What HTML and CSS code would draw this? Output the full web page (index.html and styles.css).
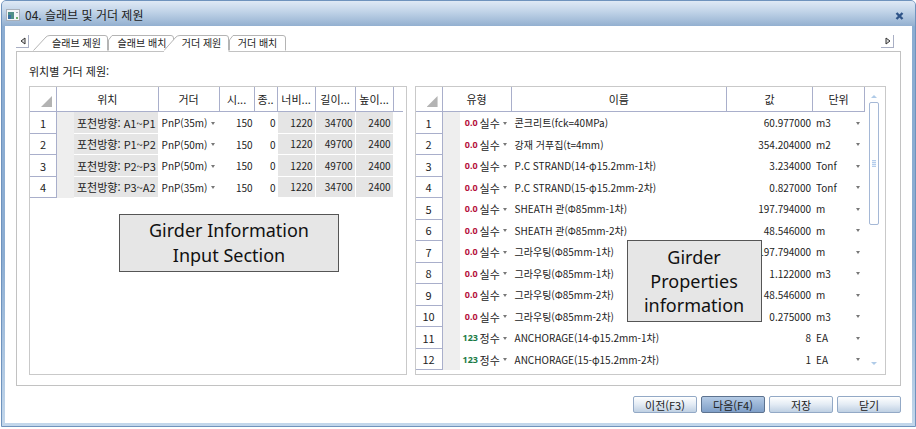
FILE: index.html
```html
<!DOCTYPE html>
<html lang="ko">
<head>
    <meta charset="UTF-8">
    <meta name="viewport" content="width=device-width, initial-scale=1.0">
    <title>04. 슬래브 및 거더 제원</title>
    <link rel="stylesheet" href="styles.css">
</head>
<body>
<div class="window">
    <header class="titlebar">
        <svg class="app-icon" width="14" height="12" viewBox="0 0 14 12">
            <rect x="0.5" y="0.5" width="13" height="11" fill="#f4f6f8" stroke="#a9b0ba"/>
            <rect x="2" y="3" width="6" height="7" fill="#4f8f88"/>
            <rect x="2" y="6" width="3" height="4" fill="#3a6fa0"/>
            <rect x="10" y="3" width="2" height="1" fill="#9aa3ae"/>
            <rect x="10" y="8" width="2" height="2" fill="#6fae6a"/>
        </svg>
        <h1>04. 슬래브 및 거더 제원</h1>
        <button type="button" class="close" aria-label="닫기">
            <svg width="9" height="8" viewBox="0 0 9 8"><path d="M1.500 1L7.500 7M7.500 1L1.500 7" stroke="#2f5488" stroke-width="2.400" fill="none"/></svg>
        </button>
    </header>

    <main class="content">
        <nav class="tabs">
            <button type="button" class="scroll-tab" aria-label="이전 탭">
                <svg width="6" height="8" viewBox="0 0 6 8"><path d="M5 1V7L1 4Z" fill="#ddd" stroke="#333"/></svg>
            </button>
            <div class="tab-list">
                <button type="button" class="tab tab-first">
                    <svg width="75" height="16" viewBox="0 0 75 16"><path d="M0.500 15.500L13 2Q14.500 0.500 17 0.500H72Q74.500 0.500 74.500 3V15.500" fill="#fff" stroke="#b4b4b4"/></svg>
                    <span>슬래브 제원</span>
                </button>
                <button type="button" class="tab tab-second">
                    <svg width="66" height="16" viewBox="0 0 66 16"><path d="M0.500 15.500V5L4 0.500H63Q65.500 0.500 65.500 3V15.500" fill="#fff" stroke="#b4b4b4"/></svg>
                    <span>슬래브 배치</span>
                </button>
                <button type="button" class="tab tab-active">
                    <svg width="65" height="17" viewBox="0 0 65 17"><path d="M0 17V16L12 2Q13.500 0.500 16 0.500H62Q64.500 0.500 64.500 3V17Z" fill="#fff"/><path d="M0 15.500L12 2Q13.500 0.500 16 0.500H62Q64.500 0.500 64.500 3V15.500" fill="none" stroke="#b4b4b4"/></svg>
                    <span>거더 제원</span>
                </button>
                <button type="button" class="tab tab-last">
                    <svg width="57" height="16" viewBox="0 0 57 16"><path d="M0.500 15.500V5L4 0.500H54Q56.500 0.500 56.500 3V15.500" fill="#fff" stroke="#b4b4b4"/></svg>
                    <span>거더 배치</span>
                </button>
            </div>
            <button type="button" class="scroll-tab" aria-label="다음 탭">
                <svg width="6" height="8" viewBox="0 0 6 8"><path d="M1 1V7L5 4Z" fill="#ddd" stroke="#333"/></svg>
            </button>
        </nav>

        <section class="panel">
            <h2>위치별 거더 제원:</h2>
            <div class="panes">
                <div class="pane pane-input">
                    <table class="grid">
                        <colgroup>
                            <col class="c-num"><col class="c-mark"><col><col class="c-girder"><col class="c-start"><col class="c-end"><col class="c-width"><col class="c-length"><col class="c-height"><col class="c-rest">
                        </colgroup>
                        <thead>
                            <tr>
                                <th><i class="corner"></i></th>
                                <th colspan="2">위치</th>
                                <th>거더</th>
                                <th>시...</th>
                                <th>종..</th>
                                <th>너비...</th>
                                <th>길이...</th>
                                <th>높이...</th>
                                <th class="rest"></th>
                            </tr>
                        </thead>
                        <tbody>
                            <tr>
                                <th>1</th><td class="mark"></td><td class="fixed place">포천방향: A1~P1</td>
                                <td><span class="drop"><select aria-label="거더 1"><option>PnP(35m)</option></select></span></td>
                                <td class="num">150</td><td class="num">0</td><td class="num fixed">1220</td><td class="num fixed">34700</td><td class="num fixed">2400</td><td></td>
                            </tr>
                            <tr>
                                <th>2</th><td class="mark"></td><td class="fixed place">포천방향: P1~P2</td>
                                <td><span class="drop"><select aria-label="거더 2"><option>PnP(50m)</option></select></span></td>
                                <td class="num">150</td><td class="num">0</td><td class="num fixed">1220</td><td class="num fixed">49700</td><td class="num fixed">2400</td><td></td>
                            </tr>
                            <tr>
                                <th>3</th><td class="mark"></td><td class="fixed place">포천방향: P2~P3</td>
                                <td><span class="drop"><select aria-label="거더 3"><option>PnP(50m)</option></select></span></td>
                                <td class="num">150</td><td class="num">0</td><td class="num fixed">1220</td><td class="num fixed">49700</td><td class="num fixed">2400</td><td></td>
                            </tr>
                            <tr>
                                <th>4</th><td class="mark"></td><td class="fixed place">포천방향: P3~A2</td>
                                <td><span class="drop"><select aria-label="거더 4"><option>PnP(35m)</option></select></span></td>
                                <td class="num">150</td><td class="num">0</td><td class="num fixed">1220</td><td class="num fixed">34700</td><td class="num fixed">2400</td><td></td>
                            </tr>
                        </tbody>
                    </table>
                    <div class="callout callout-input">Girder Information<br>Input Section</div>
                </div>

                <div class="pane pane-props">
                    <table class="grid">
                        <colgroup>
                            <col class="c-num"><col class="c-mark"><col class="c-type"><col><col class="c-value"><col class="c-unit">
                        </colgroup>
                        <thead>
                            <tr>
                                <th><i class="corner"></i></th>
                                <th colspan="2">유형</th>
                                <th>이름</th>
                                <th>값</th>
                                <th>단위</th>
                            </tr>
                        </thead>
                        <tbody>
                            <tr><th>1</th><td class="mark"></td><td><span class="drop type"><b class="real">0.0</b><select aria-label="유형 1"><option>실수</option></select></span></td><td class="name">콘크리트(fck=40MPa)</td><td class="num">60.977000</td><td><span class="drop"><select aria-label="단위 1"><option>m3</option></select></span></td></tr>
                            <tr><th>2</th><td class="mark"></td><td><span class="drop type"><b class="real">0.0</b><select aria-label="유형 2"><option>실수</option></select></span></td><td class="name">강재 거푸집(t=4mm)</td><td class="num">354.204000</td><td><span class="drop"><select aria-label="단위 2"><option>m2</option></select></span></td></tr>
                            <tr><th>3</th><td class="mark"></td><td><span class="drop type"><b class="real">0.0</b><select aria-label="유형 3"><option>실수</option></select></span></td><td class="name">P.C STRAND(14-φ15.2mm-1차)</td><td class="num">3.234000</td><td><span class="drop"><select aria-label="단위 3"><option>Tonf</option></select></span></td></tr>
                            <tr><th>4</th><td class="mark"></td><td><span class="drop type"><b class="real">0.0</b><select aria-label="유형 4"><option>실수</option></select></span></td><td class="name">P.C STRAND(15-φ15.2mm-2차)</td><td class="num">0.827000</td><td><span class="drop"><select aria-label="단위 4"><option>Tonf</option></select></span></td></tr>
                            <tr><th>5</th><td class="mark"></td><td><span class="drop type"><b class="real">0.0</b><select aria-label="유형 5"><option>실수</option></select></span></td><td class="name">SHEATH 관(Φ85mm-1차)</td><td class="num">197.794000</td><td><span class="drop"><select aria-label="단위 5"><option>m</option></select></span></td></tr>
                            <tr><th>6</th><td class="mark"></td><td><span class="drop type"><b class="real">0.0</b><select aria-label="유형 6"><option>실수</option></select></span></td><td class="name">SHEATH 관(Φ85mm-2차)</td><td class="num">48.546000</td><td><span class="drop"><select aria-label="단위 6"><option>m</option></select></span></td></tr>
                            <tr><th>7</th><td class="mark"></td><td><span class="drop type"><b class="real">0.0</b><select aria-label="유형 7"><option>실수</option></select></span></td><td class="name">그라우팅(Φ85mm-1차)</td><td class="num">197.794000</td><td><span class="drop"><select aria-label="단위 7"><option>m</option></select></span></td></tr>
                            <tr><th>8</th><td class="mark"></td><td><span class="drop type"><b class="real">0.0</b><select aria-label="유형 8"><option>실수</option></select></span></td><td class="name">그라우팅(Φ85mm-1차)</td><td class="num">1.122000</td><td><span class="drop"><select aria-label="단위 8"><option>m3</option></select></span></td></tr>
                            <tr><th>9</th><td class="mark"></td><td><span class="drop type"><b class="real">0.0</b><select aria-label="유형 9"><option>실수</option></select></span></td><td class="name">그라우팅(Φ85mm-2차)</td><td class="num">48.546000</td><td><span class="drop"><select aria-label="단위 9"><option>m</option></select></span></td></tr>
                            <tr><th>10</th><td class="mark"></td><td><span class="drop type"><b class="real">0.0</b><select aria-label="유형 10"><option>실수</option></select></span></td><td class="name">그라우팅(Φ85mm-2차)</td><td class="num">0.275000</td><td><span class="drop"><select aria-label="단위 10"><option>m3</option></select></span></td></tr>
                            <tr><th>11</th><td class="mark"></td><td><span class="drop type"><b class="int">123</b><select aria-label="유형 11"><option>정수</option></select></span></td><td class="name">ANCHORAGE(14-φ15.2mm-1차)</td><td class="num">8</td><td><span class="drop"><select aria-label="단위 11"><option>EA</option></select></span></td></tr>
                            <tr><th>12</th><td class="mark"></td><td><span class="drop type"><b class="int">123</b><select aria-label="유형 12"><option>정수</option></select></span></td><td class="name">ANCHORAGE(15-φ15.2mm-2차)</td><td class="num">1</td><td><span class="drop"><select aria-label="단위 12"><option>EA</option></select></span></td></tr>
                        </tbody>
                    </table>
                    <div class="scrollbar">
                        <i class="arrow-up"></i>
                        <div class="thumb"><i></i></div>
                        <i class="arrow-down"></i>
                    </div>
                    <div class="callout callout-props">Girder<br>Properties<br>information</div>
                </div>
            </div>
        </section>

        <footer class="actions">
            <button type="button">이전(F3)</button>
            <button type="button" class="primary">다음(F4)</button>
            <button type="button">저장</button>
            <button type="button">닫기</button>
        </footer>
    </main>
</div>
</body>
</html>
```
FILE: styles.css
```css
* {
    box-sizing: border-box;
}

body {
    margin: 0;
    background: #fff;
    color: #222;
    font-family: "Noto Sans CJK KR", "Noto Sans", sans-serif;
    font-size: 11px;
    line-height: 16px;
}

button,
select {
    font: inherit;
    color: inherit;
    margin: 0;
    padding: 0;
    border: 0;
    background: none;
}

h1,
h2 {
    margin: 0;
    font-size: 11px;
    font-weight: normal;
}

/* window frame */
.window {
    margin-left: 1px;
    padding: 0 3px 3px;
    border: 1px solid #6f93bd;
    border-radius: 5px 5px 0 0;
    background: linear-gradient(#8cadd2, #8cadd2 60%, #c3d7eb);
}

.titlebar {
    display: flex;
    align-items: center;
    gap: 5px;
    height: 25px;
    margin: 0 -3px;
    padding: 3px 11px 0 4px;
    border-radius: 4px 4px 0 0;
    background: linear-gradient(#dfe9f5, #c3d5e9 40%, #93b0d0);
}

.titlebar h1 {
    flex: 1;
    font-size: 12px;
    line-height: 20px;
}

.close,
.app-icon,
.scroll-tab svg {
    display: block;
}

.content {
    padding: 9px 11px 10px;
    background: #fff;
}

/* tabs */
.tabs {
    display: flex;
    align-items: flex-start;
    height: 16px;
    padding-right: 7px;
}

.scroll-tab {
    width: 13px;
    height: 13px;
    padding-left: 4px;
    border-right: 1px solid #a9afc4;
    border-bottom: 1px solid #a9afc4;
}

.tab-list {
    display: flex;
    flex: 1;
    padding-left: 4px;
}

.tab {
    position: relative;
    height: 16px;
    font-size: 10px;
    line-height: 14px;
}

.tab svg {
    position: absolute;
    left: 0;
    top: 0;
}

.tab span {
    position: relative;
}

.tab-first {
    width: 75px;
    padding-left: 12px;
}

.tab-second {
    width: 66px;
    padding-left: 2px;
}

.tab-active {
    z-index: 1;
    width: 65px;
    margin-left: -10px;
    padding-left: 10px;
}

.tab-last {
    width: 57px;
}

/* panel */
.panel {
    padding: 10px 14px 10px 12px;
    border: 1px solid #c2c2c2;
}

.panel h2 {
    line-height: 18px;
    margin-bottom: 6px;
}

.panes {
    display: flex;
    gap: 8px;
}

.pane {
    position: relative;
    display: flex;
    align-items: flex-start;
    min-width: 0;
    padding: 0 3px 4px 0;
    border: 1px solid #c9c9c9;
}

.pane-input {
    flex: 377 1 0;
}

.pane-props {
    flex: 472 1 0;
}

/* tables */
.grid {
    flex: 1;
    width: 100%;
    table-layout: fixed;
    border-collapse: separate;
    border-spacing: 0;
}

.grid th,
.grid td {
    padding: 0;
    font-weight: normal;
    white-space: nowrap;
}

.grid thead th {
    height: 25px;
    border-right: 1px solid #a9afcb;
    border-bottom: 1px solid #a9afcb;
}

.grid thead .rest {
    border-right: 0;
}

.grid tbody tr {
    height: 22px;
}

.grid tbody tr:nth-child(even) {
    height: 21px;
}

.grid tbody th {
    border-right: 1px solid #a9afcb;
    border-bottom: 1px solid #a9afcb;
}

.c-num {
    width: 27px;
}

.c-mark {
    width: 17px;
}

.c-girder {
    width: 61px;
}

.c-start {
    width: 35px;
}

.c-end {
    width: 23px;
}

.c-width {
    width: 38px;
}

.c-length {
    width: 40px;
}

.c-height {
    width: 38px;
}

.c-rest {
    width: 9px;
}

.c-type {
    width: 52px;
}

.c-value {
    width: 86px;
}

.c-unit {
    width: 52px;
}

.corner {
    display: block;
    width: 11px;
    height: 11px;
    margin: 5px 0 0 11px;
    background: #b3b3b3;
    clip-path: polygon(100% 0, 100% 100%, 0 100%);
}

.grid .mark {
    background: #eee;
}

.grid .fixed {
    background: #e5e5e5;
    background-clip: padding-box;
    border-right: 1px solid #fff;
    border-bottom: 1px solid #fff;
}

.grid .place {
    padding-left: 3px;
}

.grid .num {
    padding-right: 2px;
    font-size: 10px;
    text-align: right;
}

.grid .name {
    padding-left: 3px;
    font-size: 10px;
}

.drop {
    display: flex;
    align-items: center;
    gap: 2px;
    padding: 0 5px 0 3px;
    font-size: 10px;
}

.drop::after {
    content: "";
    border: 2px solid transparent;
    border-top: 3px solid #777;
    border-bottom: 0;
}

.drop select {
    flex: 1;
    min-width: 0;
    appearance: none;
    outline: none;
}

.type {
    font-size: 11px;
}

.type b {
    width: 15px;
    font-family: "Noto Sans", sans-serif;
    font-size: 9px;
    text-align: right;
}

.real {
    color: #b5123c;
}

.int {
    color: #1b7a45;
}

/* scrollbar */
.scrollbar {
    display: flex;
    flex-direction: column;
    align-items: center;
    align-self: stretch;
    width: 17px;
    padding-top: 8px;
}

.thumb {
    display: flex;
    align-items: center;
    justify-content: center;
    width: 10px;
    height: 123px;
    margin-top: 4px;
    border: 1px solid #a5b8d6;
    border-radius: 2px;
}

.thumb i {
    width: 4px;
    height: 7px;
    background: repeating-linear-gradient(#b5cdec 0 1px, #e6effa 1px 2px);
}

.arrow-up,
.arrow-down {
    border: 3px solid transparent;
}

.arrow-up {
    border-top: 0;
    border-bottom-color: #b0cbe8;
}

.arrow-down {
    margin-top: auto;
    margin-bottom: 5px;
    border-bottom: 0;
    border-top-color: #b0cbe8;
}

/* notes over the tables */
.callout {
    position: absolute;
    border: 1px solid #555;
    background: #e6e6e6;
    color: #111;
    font-family: "Noto Sans", sans-serif;
    font-size: 18px;
    text-align: center;
}

.callout-input {
    left: 89px;
    top: 127px;
    width: 220px;
    padding: 3px 0;
    line-height: 25px;
}

.callout-props {
    left: 211px;
    top: 153px;
    width: 135px;
    padding: 4px 0;
    line-height: 24px;
}

/* bottom buttons */
.actions {
    display: flex;
    justify-content: flex-end;
    gap: 4px;
    margin-top: 10px;
}

.actions button {
    width: 64px;
    height: 17px;
    border: 1px solid #93a9c6;
    border-radius: 2px;
    background: linear-gradient(#fff, #e3ebf4 50%, #bfd0e3);
    line-height: 14px;
}

.actions .primary {
    border-color: #5d7390;
    background: linear-gradient(#b5cbe5, #7f9fc8);
}
```
